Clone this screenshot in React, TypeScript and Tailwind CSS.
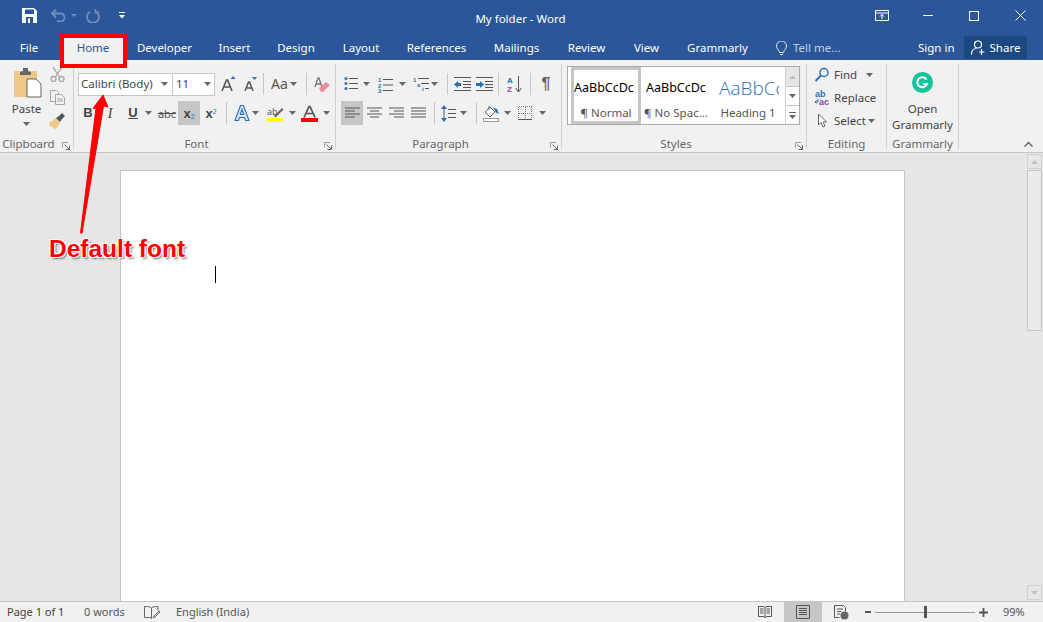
import type { ReactNode } from "react";

const tabs = [
  { name: "Developer", w: "w-[73px]" },
  { name: "Insert", w: "w-[67px]" },
  { name: "Design", w: "w-[56px]" },
  { name: "Layout", w: "w-[74px]" },
  { name: "References", w: "w-[77px]" },
  { name: "Mailings", w: "w-[83px]" },
  { name: "Review", w: "w-[57px]" },
  { name: "View", w: "w-[63px]" },
  { name: "Grammarly", w: "w-[79px]" },
];

function Caret({ className = "" }: { className?: string }) {
  return (
    <svg width="7" height="4" viewBox="0 0 7 4" className={`shrink-0 ${className}`}>
      <path d="M0 0h7L3.500 4z" fill="#666" />
    </svg>
  );
}

function Launcher() {
  return (
    <svg width="8" height="8" viewBox="0 0 8 8" className="block">
      <path d="M.5 5.500V.5H6" fill="none" stroke="#9a9a9a" />
      <path d="M2.500 2.500l4.500 4.500M3.500 7.500h4v-4" fill="none" stroke="#666" />
    </svg>
  );
}

function Sep({ h = "h-[22px]" }: { h?: string }) {
  return <div className={`w-px ${h} bg-[#c6c6c6] shrink-0`} />;
}

function Tool({ w, children, active }: { w: string; children: ReactNode; active?: boolean }) {
  return (
    <div className={`${w} h-[24px] flex items-center justify-center shrink-0 ${active ? "bg-[#c6c6c6]" : ""}`}>
      {children}
    </div>
  );
}

function Group({ w, label, launcher, children }: { w: string; label: string; launcher?: boolean; children: ReactNode }) {
  return (
    <section className={`${w} h-[85px] shrink-0 flex flex-col border-r border-[#d0d0d0]`}>
      <div className="h-[70px]">{children}</div>
      <div className={`relative h-[15px] pt-[3px] leading-[14px] text-center text-[11.5px] text-[#666] ${launcher ? "pr-[16px]" : ""}`}>
        {label}
        {launcher && (
          <span className="absolute right-[3px] top-[8px]">
            <Launcher />
          </span>
        )}
      </div>
    </section>
  );
}

function Lines({ rows }: { rows: [number, number][] }) {
  return (
    <svg width="15" height="13" viewBox="0 0 15 13">
      {rows.map(([x, w], i) => (
        <rect key={i} x={x} y={i * 3 + 0.5} width={w} height="1" fill="#555" />
      ))}
    </svg>
  );
}

function FontGroup() {
  return (
    <div className="pt-[8px] pl-[4px]">
      <div className="flex items-center h-[24px]">
        <div className="w-[95px] h-[23px] bg-white border border-[#c6c6c6] flex items-center pl-[2px] text-[#444] leading-none">
          <span className="flex-1">Calibri (Body)</span>
          <Caret className="mr-[4px]" />
        </div>
        <div className="w-[43px] h-[23px] -ml-px bg-white border border-[#c6c6c6] flex items-center pl-[3px] text-[#444] leading-none">
          <span className="flex-1">11</span>
          <Caret className="mr-[3px]" />
        </div>
        <Tool w="w-[22px] ml-[2px]">
          <svg width="15" height="16" viewBox="0 0 15 16">
            <path d="M1 15L5.500 4h1L11 15M3 11h7" fill="none" stroke="#555" strokeWidth="1.600" />
            <path d="M9.500 3L12 0l2.500 3z" fill="#2b6fb5" />
          </svg>
        </Tool>
        <Tool w="w-[22px]">
          <svg width="13" height="14" viewBox="0 0 13 14">
            <path d="M1 14L4.500 5h1L9 14M2.500 11H7.500" fill="none" stroke="#555" strokeWidth="1.500" />
            <path d="M8 0h5l-2.500 3z" fill="#2b6fb5" />
          </svg>
        </Tool>
        <div className="w-[2px]" />
        <Sep />
        <div className="w-[7px]" />
        <span className="text-[14px] text-[#555] w-[18px] leading-none">Aa</span>
        <Caret className="ml-[1px]" />
        <div className="w-[9px]" />
        <Sep />
        <Tool w="w-[24px] ml-[3px]">
          <svg width="17" height="17" viewBox="0 0 17 17">
            <path d="M1 11L4 2h1l3 9M2 8h5" fill="none" stroke="#777" strokeWidth="1.300" />
            <path d="M5 12l7-6 4 3-7 7H7z" fill="#ee8d99" />
          </svg>
        </Tool>
      </div>
      <div className="flex items-center h-[24px] mt-[5px] pl-[3px]">
        <Tool w="w-[14px]">
          <span className="text-[13px] font-bold text-[#444] font-['Liberation_Sans',sans-serif]">B</span>
        </Tool>
        <Tool w="w-[20px] ml-[5px]">
          <span className="text-[14px] italic text-[#444] font-['Liberation_Serif',serif]">I</span>
        </Tool>
        <Tool w="w-[20px] ml-[3px]">
          <span className="text-[13px] font-bold underline text-[#444] font-['Liberation_Sans',sans-serif]">U</span>
        </Tool>
        <Caret className="ml-[2px]" />
        <Tool w="w-[20px] ml-[5px]">
          <span className="text-[11px] text-[#555] line-through leading-none">abc</span>
        </Tool>
        <Tool w="w-[22px] ml-[1px]" active>
          <span className="text-[13px] font-bold text-[#444] leading-none font-['Liberation_Sans',sans-serif]">
            x<sub className="text-[7px] text-[#2b6fb5] font-normal">2</sub>
          </span>
        </Tool>
        <Tool w="w-[22px]">
          <span className="text-[13px] font-bold text-[#444] leading-none font-['Liberation_Sans',sans-serif]">
            x<sup className="text-[7px] text-[#2b6fb5] font-normal">2</sup>
          </span>
        </Tool>
        <div className="w-[4px]" />
        <Sep />
        <Tool w="w-[24px] ml-[3px]">
          <svg width="16" height="16" viewBox="0 0 16 16">
            <path d="M1 15.500L6.500.5h3l5.500 15h-3.500l-1-3h-5l-1 3zM6.300 9.500h3.400L8 4.500z" fill="#dbe7f4" stroke="#2b6fb5" strokeWidth="1.100" />
          </svg>
        </Tool>
        <Caret className="-ml-[2px]" />
        <Tool w="w-[24px] ml-[4px]">
          <svg width="17" height="17" viewBox="0 0 17 17">
            <text x="0" y="10" fontSize="9" fill="#555" fontFamily="Noto Sans">ab</text>
            <path d="M7 11l8-8 1.500 1.500-8 8z" fill="#666" />
            <rect y="13" width="16" height="4" fill="#ffff00" />
          </svg>
        </Tool>
        <Caret className="ml-[2px]" />
        <Tool w="w-[24px] ml-[1px]">
          <svg width="17" height="17" viewBox="0 0 17 17">
            <path d="M3 12.500L8 1.500h1l5 11M5.500 8.500h6" fill="none" stroke="#555" strokeWidth="1.700" />
            <rect y="13" width="17" height="4" fill="#ff0000" />
          </svg>
        </Tool>
        <Caret className="ml-[2px]" />
      </div>
    </div>
  );
}

function ParagraphGroup() {
  const dots = (
    <svg width="14" height="14" viewBox="0 0 14 14">
      {[1, 6, 11].map((y) => (
        <g key={y}>
          <circle cx="2" cy={y + 0.5} r="1.500" fill="#2b6fb5" />
          <rect x="5" y={y} width="9" height="1" fill="#555" />
        </g>
      ))}
    </svg>
  );
  const nums = (
    <svg width="15" height="17" viewBox="0 0 15 17">
      {["1", "2", "3"].map((n, i) => (
        <g key={n}>
          <text x="0" y={i * 5.500 + 6} fontSize="6" fontWeight="700" fill="#2b6fb5" fontFamily="Liberation Sans">{n}</text>
          <rect x="5" y={i * 5.500 + 3} width="10" height="1" fill="#555" />
        </g>
      ))}
    </svg>
  );
  const multi = (
    <svg width="16" height="17" viewBox="0 0 16 17">
      <text x="0" y="6" fontSize="6" fontWeight="700" fill="#2b6fb5" fontFamily="Liberation Sans">1</text>
      <rect x="5" y="2" width="11" height="1" fill="#555" />
      <text x="4" y="11" fontSize="6" fontWeight="700" fill="#2b6fb5" fontFamily="Liberation Sans">a</text>
      <rect x="8" y="7" width="8" height="1" fill="#555" />
      <text x="9" y="15" fontSize="6" fontWeight="700" fill="#2b6fb5" fontFamily="Liberation Sans">i</text>
      <rect x="12" y="12" width="4" height="1" fill="#555" />
    </svg>
  );
  return (
    <div className="pt-[8px] pl-[5px]">
      <div className="flex items-center h-[24px]">
        <Tool w="w-[19px]">{dots}</Tool>
        <Caret className="ml-[3px] mr-[7px]" />
        <Tool w="w-[17px]">{nums}</Tool>
        <Caret className="ml-[5px] mr-[6px]" />
        <Tool w="w-[17px]">{multi}</Tool>
        <Caret className="ml-[2px] mr-[9px]" />
        <Sep />
        <Tool w="w-[29px]">
          <svg width="17" height="14" viewBox="0 0 17 14">
            <path d="M0 .5h17M9 4.500h8M9 7.500h8M9 10.500h8M0 13.500h17" stroke="#555" fill="none" />
            <path d="M0 7.500L4 4v2h3v3H4v2z" fill="#2b6fb5" />
          </svg>
        </Tool>
        <Tool w="w-[17px] -ml-px">
          <svg width="17" height="14" viewBox="0 0 17 14">
            <path d="M0 .5h17M9 4.500h8M9 7.500h8M9 10.500h8M0 13.500h17" stroke="#555" fill="none" />
            <path d="M8 7.500L4 4v2H0v3h4v2z" fill="#2b6fb5" />
          </svg>
        </Tool>
        <div className="w-[6px]" />
        <Sep />
        <Tool w="w-[31px]">
          <svg width="15" height="17" viewBox="0 0 15 17">
            <text x="0" y="7" fontSize="8" fontWeight="700" fill="#2b6fb5" fontFamily="Liberation Sans">A</text>
            <text x="0" y="16" fontSize="8" fontWeight="700" fill="#8e44ad" fontFamily="Liberation Sans">Z</text>
            <path d="M11.500 0v15M8.500 12l3 4 3-4" fill="none" stroke="#555" />
          </svg>
        </Tool>
        <Sep />
        <Tool w="w-[30px]">
          <span className="text-[16px] font-bold text-[#666] leading-none font-['Liberation_Sans',sans-serif]">¶</span>
        </Tool>
      </div>
      <div className="flex items-center h-[24px] mt-[5px]">
        <Tool w="w-[22px]" active><Lines rows={[[0, 15], [0, 10], [0, 15], [0, 10]]} /></Tool>
        <Tool w="w-[22px]"><Lines rows={[[0, 15], [3, 9], [0, 15], [3, 9]]} /></Tool>
        <Tool w="w-[22px]"><Lines rows={[[0, 15], [5, 10], [0, 15], [5, 10]]} /></Tool>
        <Tool w="w-[22px]"><Lines rows={[[0, 15], [0, 15], [0, 15], [0, 15]]} /></Tool>
        <div className="w-[5px]" />
        <Sep />
        <Tool w="w-[27px]">
          <svg width="15" height="17" viewBox="0 0 15 17">
            <path d="M3 3v11" stroke="#555" fill="none" />
            <path d="M3 0l3 4H0zM3 17l-3-4h6z" fill="#2b6fb5" />
            <path d="M7 4.500h8M7 8.500h8M7 12.500h8" stroke="#555" fill="none" />
          </svg>
        </Tool>
        <Caret className="-ml-[2px] mr-[9px]" />
        <Sep />
        <Tool w="w-[27px] ml-[1px]">
          <svg width="17" height="17" viewBox="0 0 17 17">
            <path d="M2 7l5-5 5 5-5 5z" fill="#fff" stroke="#666" />
            <path d="M6 1v4" stroke="#666" />
            <path d="M10 2.500l4 1.500 2 5-3-1.500z" fill="#2b6fb5" />
            <rect x=".5" y="13.500" width="15" height="3" fill="#fff" stroke="#999" />
          </svg>
        </Tool>
        <Caret className="-ml-[1px] mr-[7px]" />
        <svg width="14" height="14" viewBox="0 0 14 14" className="shrink-0" shapeRendering="crispEdges">
          <path d="M.5.500h13M.5 7.500h13M.5.500v13M7.500 .5v13M13.500.5v13" fill="none" stroke="#777" strokeDasharray="1 1" />
          <path d="M0 13.500h14" fill="none" stroke="#555" />
        </svg>
        <Caret className="ml-[7px]" />
      </div>
    </div>
  );
}

function StyleCell({ w, label, active, children }: { w: string; label: string; active?: boolean; children: ReactNode }) {
  return (
    <div className={`${w} h-full shrink-0 flex flex-col items-center overflow-hidden border-[3px] ${active ? "border-[#c6c6c6]" : "border-white"}`}>
      <div className="h-[36px] w-full flex items-center whitespace-nowrap">{children}</div>
      <div className="leading-[14px] text-[#555] whitespace-nowrap">{label}</div>
    </div>
  );
}

function StylesGroup() {
  return (
    <div className="pl-[5px] pt-[2px]">
      <div className="w-[233px] h-[59px] bg-white border border-[#ababab] flex pl-[3px]">
        <StyleCell w="w-[70px]" label="¶ Normal" active>
          <span className="block w-[60px] overflow-hidden text-[12.500px] text-black">AaBbCcDc</span>
        </StyleCell>
        <StyleCell w="w-[70px]" label="¶ No Spac...">
          <span className="block w-[60px] ml-[2px] overflow-hidden text-[12.500px] text-black">AaBbCcDc</span>
        </StyleCell>
        <StyleCell w="w-[74px]" label="Heading 1">
          <span className="block w-[60px] ml-[5px] overflow-hidden text-[19px] font-light text-[#2e74b5] font-['Open_Sans',sans-serif]">AaBbCc</span>
        </StyleCell>
        <div className="flex-1 flex flex-col border-l border-[#d0d0d0] bg-[#f1f1f1]">
          <div className="h-[20px] flex items-center justify-center border-b border-[#c6c6c6] bg-[#e6e6e6]">
            <svg width="7" height="4" viewBox="0 0 7 4"><path d="M3.500 0L7 4H0z" fill="#c0c0c0" /></svg>
          </div>
          <div className="h-[19px] flex items-center justify-center bg-white border-b border-[#c6c6c6]">
            <Caret />
          </div>
          <div className="flex-1 flex flex-col items-center justify-center gap-[2px] bg-white">
            <div className="w-[7px] h-px bg-[#666]" />
            <Caret />
          </div>
        </div>
      </div>
    </div>
  );
}

function EditingGroup() {
  return (
    <div className="-mt-px pl-[7px] text-[#444]">
      <div className="h-[23px] flex items-center">
        <svg width="16" height="15" viewBox="0 0 16 15" className="mr-[4px]">
          <circle cx="10" cy="5.500" r="4" fill="none" stroke="#2b6fb5" strokeWidth="1.500" />
          <path d="M7 8.500l-5.500 5.500" stroke="#2b6fb5" strokeWidth="2" />
        </svg>
        <span className="w-[32px]">Find</span>
        <Caret />
      </div>
      <div className="h-[23px] flex items-center">
        <svg width="16" height="16" viewBox="0 0 16 16" className="mr-[4px]">
          <text x="1" y="7" fontSize="9" fontWeight="700" fill="#2b6fb5" fontFamily="Liberation Sans">ab</text>
          <text x="5" y="15" fontSize="9" fontWeight="700" fill="#8e44ad" fontFamily="Liberation Sans">ac</text>
          <path d="M4 9v3H1M2.500 10.500L1 12l1.500 1.500" fill="none" stroke="#2b6fb5" />
        </svg>
        <span>Replace</span>
      </div>
      <div className="h-[23px] flex items-center">
        <svg width="16" height="15" viewBox="0 0 16 15" className="mr-[4px]">
          <path d="M4.500 1v11l2.500-2.500 2 4.500 2-1-2-4h3.500z" fill="#fff" stroke="#666" />
        </svg>
        <span className="w-[34px]">Select</span>
        <Caret />
      </div>
    </div>
  );
}

function GrammarlyGroup() {
  return (
    <div className="flex flex-col items-center pt-[8px] text-[#444] leading-[16px]">
      <svg width="21" height="21" viewBox="0 0 21 21" className="mb-[8px]">
        <circle cx="10.500" cy="10.500" r="10.500" fill="#15c39a" />
        <path d="M14.500 7.500a5 5 0 1 0 .5 4.500h-4" fill="none" stroke="#fff" strokeWidth="2" />
      </svg>
      <span>Open</span>
      <span>Grammarly</span>
    </div>
  );
}

function ClipboardGroup() {
  return (
    <div className="flex pt-[4px] pl-[11px]">
      <div className="w-[31px] flex flex-col items-center text-[#444]">
        <svg width="30" height="30" viewBox="0 0 30 30">
          <path d="M2 3h23v26H2z" fill="#edc887" />
          <path d="M8 4l3-1V0h5v3l3 1v3H8z" fill="#666" />
          <path d="M15 11h9l5 5v13H15z" fill="#fff" stroke="#666" />
        </svg>
        <span className="leading-[16px] mt-[3px]">Paste</span>
        <Caret className="mt-[5px]" />
      </div>
      <div className="flex flex-col items-center gap-[8px] ml-[7px] -mt-[1px]">
        <svg width="15" height="15" viewBox="0 0 15 15">
          <path d="M3 0l6.500 10M12 0L5.500 10" stroke="#a6a6a6" strokeWidth="1.300" fill="none" />
          <circle cx="3.500" cy="12" r="2.500" fill="none" stroke="#a6a6a6" strokeWidth="1.300" />
          <circle cx="11.500" cy="12" r="2.500" fill="none" stroke="#a6a6a6" strokeWidth="1.300" />
        </svg>
        <svg width="15" height="15" viewBox="0 0 15 15">
          <path d="M.5.500h6l2 2v9h-8z" fill="#f1f1f1" stroke="#a6a6a6" />
          <path d="M5.500 4.500h6l3 3v7h-9z" fill="#f1f1f1" stroke="#a6a6a6" />
          <path d="M7 9h6M7 11h6" stroke="#a6a6a6" />
        </svg>
        <svg width="16" height="16" viewBox="0 0 16 16">
          <path d="M0 10l7-5 4 5-4 6-3-1-1-2-2 1z" fill="#edc887" />
          <path d="M7 5l3-2 3-3 3 3-3 3-2 3z" fill="#555" />
        </svg>
      </div>
    </div>
  );
}

export default function App() {
  return (
    <div className="relative w-[1043px] h-[622px] overflow-hidden flex flex-col bg-[#f1f1f1] font-['Noto_Sans',sans-serif] text-[11.500px]">
      {/* title bar */}
      <header className="h-[34px] bg-[#2b579a] flex items-center text-white shrink-0">
        <div className="w-[475px] -mt-[3px] flex items-center pl-[22px]">
          <svg width="15" height="15" viewBox="0 0 15 15">
            <path d="M0 0h12l3 3v12H0z" fill="#fff" />
            <rect x="3" y="1.500" width="9" height="4.500" fill="#2b579a" />
            <rect x="4" y="9" width="7" height="6" fill="#2b579a" />
            <rect x="6" y="10.500" width="2" height="4.500" fill="#fff" />
          </svg>
          <svg width="15" height="13" viewBox="0 0 15 13" className="ml-[14px]">
            <path d="M1.500 4.500h8a4 4 0 0 1 0 8H6M5 .5l-4 4 4 4" fill="none" stroke="#6f8fbd" strokeWidth="1.800" />
          </svg>
          <svg width="6" height="3" viewBox="0 0 6 3" className="ml-[5px]">
            <path d="M0 0h6L3 3z" fill="#6f8fbd" />
          </svg>
          <svg width="14" height="14" viewBox="0 0 14 14" className="ml-[9px]">
            <path d="M4.500 2.500a6 6 0 1 0 5 0M9.500 0v3.500H13" fill="none" stroke="#6f8fbd" strokeWidth="1.800" />
          </svg>
          <svg width="6" height="7" viewBox="0 0 6 7" className="ml-[19px]">
            <path d="M0 0h6v1H0zM0 3h6L3 6.500z" fill="#fff" />
          </svg>
        </div>
        <div className="w-[91px] mt-[4px] text-center whitespace-nowrap">My folder - Word</div>
        <div className="flex-1 -mt-[3px] flex items-center">
          <svg width="14" height="11" viewBox="0 0 14 11" className="ml-[309px]">
            <path d="M.5.5h13v10H.5zM.5 3h13M7 9V4.500M5 6.500l2-2 2 2" fill="none" stroke="#fff" />
          </svg>
          <div className="w-[10px] h-px bg-white ml-[34px]" />
          <div className="w-[10px] h-[10px] border border-white ml-[36px]" />
          <svg width="11" height="11" viewBox="0 0 11 11" className="ml-[36px]">
            <path d="M.5.5l10 10M10.500.5l-10 10" stroke="#fff" fill="none" />
          </svg>
        </div>
      </header>

      {/* tab row */}
      <nav className="h-[26px] bg-[#2b579a] flex items-stretch shrink-0 text-white">
        <div className="w-[58px] pt-[2px] flex items-center justify-center">File</div>
        <div className="w-[66px] mx-[2px] pt-[2px] bg-[#f1f1f1] text-[#2b579a] flex items-center justify-center">Home</div>
        {tabs.map((t) => (
          <div key={t.name} className={`${t.w} pt-[2px] flex items-center justify-center whitespace-nowrap`}>
            {t.name}
          </div>
        ))}
        <div className="w-[142px] ml-[19px] pt-[2px] flex items-center text-[#c3d0e4]">
          <svg width="11" height="15" viewBox="0 0 11 15" className="mr-[6px]">
            <path d="M3.500 11.500C3 8.500.5 8 .5 5a5 5 0 0 1 10 0c0 3-2.500 3.500-3 6.500zM4 13.500h3" fill="none" stroke="#dfe6f1" />
          </svg>
          Tell me...
        </div>
        <div className="w-[46px] pt-[2px] flex items-center whitespace-nowrap">Sign in</div>
        <div className="w-[63px] h-[23px] mt-[2px] bg-[#1b4a83] flex items-center justify-center gap-[5px]">
          <svg width="14" height="15" viewBox="0 0 14 15">
            <circle cx="7" cy="4.500" r="3.500" fill="none" stroke="#fff" strokeWidth="1.200" />
            <path d="M.5 14.500c0-4 2.500-6 5-6M10.500 9v6M8 12h5.500" fill="none" stroke="#fff" strokeWidth="1.200" />
          </svg>
          Share
        </div>
      </nav>

      {/* ribbon */}
      <div className="h-[93px] pt-[4px] flex border-b border-[#c6c6c6] shrink-0 relative">
        <Group w="w-[74px]" label="Clipboard" launcher><ClipboardGroup /></Group>
        <Group w="w-[262px]" label="Font" launcher><FontGroup /></Group>
        <Group w="w-[226px]" label="Paragraph" launcher><ParagraphGroup /></Group>
        <Group w="w-[245px]" label="Styles" launcher><StylesGroup /></Group>
        <Group w="w-[80px]" label="Editing"><EditingGroup /></Group>
        <Group w="w-[72px]" label="Grammarly"><GrammarlyGroup /></Group>
        <svg width="9" height="6" viewBox="0 0 9 6" className="absolute left-[1024px] top-[81px]">
          <path d="M.5 5.500l4-4 4 4" fill="none" stroke="#666" strokeWidth="1.500" />
        </svg>
      </div>

      {/* document area */}
      <main className="flex-1 min-h-0 flex bg-[#e6e6e6]">
        <div className="flex-1 overflow-hidden flex justify-center pt-[17px] pr-[2px]">
          <div className="w-[785px] h-[900px] shrink-0 bg-white border border-[#c6c6c6] pl-[94px] pt-[95px]">
            <div className="w-px h-[17px] bg-black" />
          </div>
        </div>
        <aside className="w-[16px] flex flex-col pt-[1px] pb-px">
          <div className="w-[15px] h-[15px] border border-[#d0d0d0] flex items-center justify-center">
            <svg width="7" height="4" viewBox="0 0 7 4"><path d="M3.500 0L7 4H0z" fill="#c0c0c0" /></svg>
          </div>
          <div className="w-[15px] h-[161px] mt-px border border-[#c6c6c6] bg-[#ebebeb]" />
          <div className="flex-1" />
          <div className="w-[15px] h-[15px] border border-[#d0d0d0] flex items-center justify-center">
            <svg width="7" height="4" viewBox="0 0 7 4"><path d="M0 0h7L3.500 4z" fill="#c0c0c0" /></svg>
          </div>
        </aside>
      </main>

      {/* status bar */}
      <footer className="h-[21px] shrink-0 border-t border-[#c6c6c6] flex items-center text-[11px] text-[#555]">
        <span className="ml-[7px] w-[77px] whitespace-nowrap text-[#444]">Page 1 of 1</span>
        <span className="w-[60px] whitespace-nowrap">0 words</span>
        <svg width="16" height="13" viewBox="0 0 16 13">
          <path d="M7.500 2C6 .5 3 .5.500.5v11h5l2 1V2zM7.500 2C9 .5 12 .5 14 .5v4M10 10l5-5 1 1-5 5-2 1z" fill="none" stroke="#666" />
        </svg>
        <span className="ml-[16px] w-[582px] whitespace-nowrap">English (India)</span>
        <svg width="14" height="14" viewBox="0 0 14 14">
          <path d="M.5 1.500h5l1.500 1 1.500-1h5v10h-5L7 12.500 5.500 11.500h-5zM7 2.500v10M2 4h3.500M2 6h3.500M2 8h3.500M8.500 4H12M8.500 6H12M8.500 8H12" fill="none" stroke="#555" />
        </svg>
        <div className="w-[38px] h-[20px] ml-[12px] bg-[#c6c6c6] flex items-center justify-center">
          <svg width="14" height="14" viewBox="0 0 14 14">
            <path d="M.5.500h13v13H.5zM3 3.500h8M3 5.500h8M3 7.500h8M3 9.500h8" fill="none" stroke="#555" />
          </svg>
        </div>
        <svg width="15" height="15" viewBox="0 0 15 15" className="ml-[12px]">
          <path d="M.5.500h9l2 2v4M.5.500v12h5M3 4h6M3 6.500h4M3 9h3" fill="none" stroke="#555" />
          <circle cx="10.500" cy="10.500" r="4" fill="#666" />
        </svg>
        <div className="w-[6px] h-[2px] bg-[#555] ml-[16px]" />
        <div className="relative w-[100px] h-px bg-[#999] ml-[4px]">
          <div className="absolute left-[49px] -top-[6px] w-[3px] h-[12px] bg-[#555]" />
        </div>
        <svg width="9" height="9" viewBox="0 0 9 9" className="ml-[4px]">
          <path d="M0 4.500h9M4.500 0v9" stroke="#555" strokeWidth="1.800" fill="none" />
        </svg>
        <span className="ml-[15px]">99%</span>
      </footer>

      {/* annotation over the screenshot */}
      <div className="absolute left-[60px] top-[34px] w-[67px] h-[34px] border-[4px] border-[#ff0000]" />
      <svg width="50" height="150" viewBox="0 0 50 150" className="absolute left-[70px] top-[90px]">
        <path d="M33 5l5 12-4.500-1L12 143h-1.500L26 18l-3 .5z" fill="#ff0000" stroke="#ff0000" strokeWidth="1" />
      </svg>
      <div className="absolute left-[49px] top-[234px] text-[24.500px] leading-[30px] font-bold text-[#ff0000] whitespace-nowrap font-['Liberation_Sans',sans-serif] [text-shadow:1px_1px_0_#fff,-1px_-1px_0_#fff,1px_-1px_0_#fff,-1px_1px_0_#fff,2px_2px_2px_#777]">
        Default font
      </div>
    </div>
  );
}
